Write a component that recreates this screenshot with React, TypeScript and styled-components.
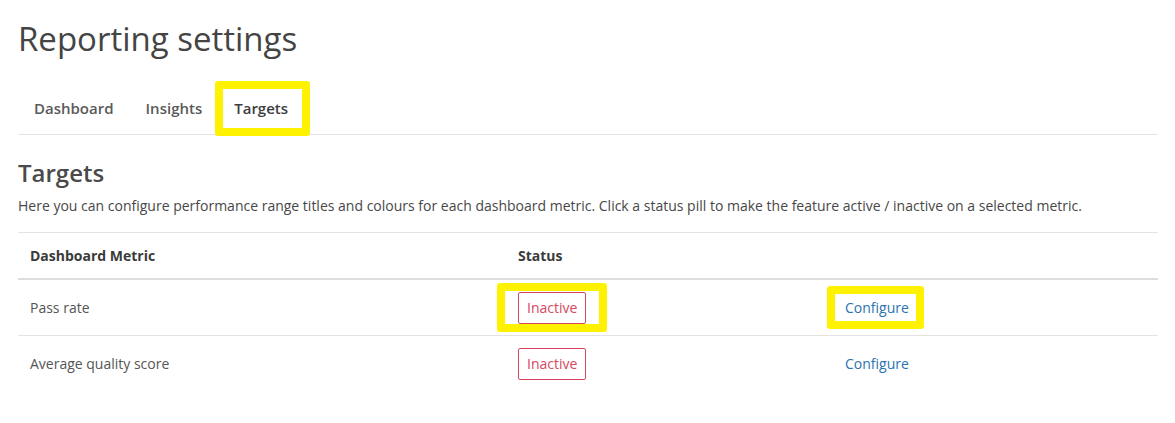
import React from "react";
import styled, { createGlobalStyle } from "styled-components";

const GlobalStyle = createGlobalStyle`
  body {
    margin: 0;
    background: #fff;
    font-family: "Open Sans", "Liberation Sans", sans-serif;
    color: #555;
  }
`;

const Page = styled.div`
  padding: 16px 17px 0 18px;
`;

const Title = styled.h1`
  margin: 0;
  font-size: 33px;
  font-weight: 400;
  line-height: 46px;
  color: #444;
`;

const Tabs = styled.div`
  display: flex;
  margin-top: 28px;
  border-bottom: 1px solid #e3e3e3;
`;

const Tab = styled.div<{ $active?: boolean }>`
  padding: 8px 16px 16px;
  font-size: 15px;
  font-weight: 600;
  line-height: 20px;
  color: ${({ $active }) => ($active ? "#3d3d3d" : "#5a5a5a")};
`;

// yellow annotation frame drawn over an element without moving it
const Highlight = styled.span<{ $t: number; $r: number; $b: number; $l: number }>`
  position: relative;
  display: inline-block;
  &::after {
    content: "";
    position: absolute;
    top: ${({ $t }) => -$t}px;
    right: ${({ $r }) => -$r}px;
    bottom: ${({ $b }) => -$b}px;
    left: ${({ $l }) => -$l}px;
    border: 8px solid #fff200;
    border-radius: 3px;
    pointer-events: none;
  }
`;

const SectionTitle = styled.h2`
  margin: 22px 0 0;
  font-size: 24px;
  font-weight: 600;
  line-height: 32px;
  color: #4a4a4a;
`;

const Description = styled.p`
  margin: 7px 0 0;
  font-size: 14px;
  line-height: 20px;
  color: #474747;
`;

const Table = styled.table`
  width: 1140px;
  margin-top: 16px;
  border-collapse: collapse;
  font-size: 14px;
`;

const Th = styled.th<{ $w?: number }>`
  width: ${({ $w }) => ($w ? `${$w}px` : "auto")};
  text-align: left;
  padding: 0 12px;
  height: 45px;
  font-weight: 700;
  color: #3b3b3b;
  border-top: 1px solid #e3e3e3;
  border-bottom: 2px solid #dedede;
`;

const Row = styled.tr<{ $last?: boolean }>`
  border-bottom: ${({ $last }) => ($last ? "none" : "1px solid #e3e3e3")};
`;

const Td = styled.td`
  padding: 0 12px;
  height: 55px;
  color: #555;
  vertical-align: middle;
`;

const Pill = styled.span`
  display: inline-block;
  padding: 0 8px;
  height: 30px;
  line-height: 30px;
  border: 1px solid #d4485d;
  border-radius: 2px;
  color: #d4485d;
  font-size: 14px;
`;

const Link = styled.a`
  color: #2a72b0;
  text-decoration: none;
  font-size: 14px;
`;

const metrics = [
  { name: "Pass rate", highlight: true },
  { name: "Average quality score", highlight: false },
];

export default function App() {
  return (
    <>
      <GlobalStyle />
      <Page>
        <Title>Reporting settings</Title>
        <Tabs>
          <Tab>Dashboard</Tab>
          <Tab>Insights</Tab>
          <Highlight $t={9} $r={6} $b={2} $l={3}>
            <Tab $active>Targets</Tab>
          </Highlight>
        </Tabs>
        <SectionTitle>Targets</SectionTitle>
        <Description>
          Here you can configure performance range titles and colours for each
          dashboard metric. Click a status pill to make the feature active /
          inactive on a selected metric.
        </Description>
        <Table>
          <thead>
            <tr>
              <Th $w={464}>Dashboard Metric</Th>
              <Th $w={303}>Status</Th>
              <Th />
            </tr>
          </thead>
          <tbody>
            {metrics.map((m, i) => (
              <Row key={m.name} $last={i === metrics.length - 1}>
                <Td>{m.name}</Td>
                <Td>
                  {m.highlight ? (
                    <Highlight $t={9} $r={21} $b={8} $l={21}>
                      <Pill>Inactive</Pill>
                    </Highlight>
                  ) : (
                    <Pill>Inactive</Pill>
                  )}
                </Td>
                <Td>
                  {m.highlight ? (
                    <Highlight $t={12} $r={15} $b={12} $l={18}>
                      <Link href="#">Configure</Link>
                    </Highlight>
                  ) : (
                    <Link href="#">Configure</Link>
                  )}
                </Td>
              </Row>
            ))}
          </tbody>
        </Table>
      </Page>
    </>
  );
}
